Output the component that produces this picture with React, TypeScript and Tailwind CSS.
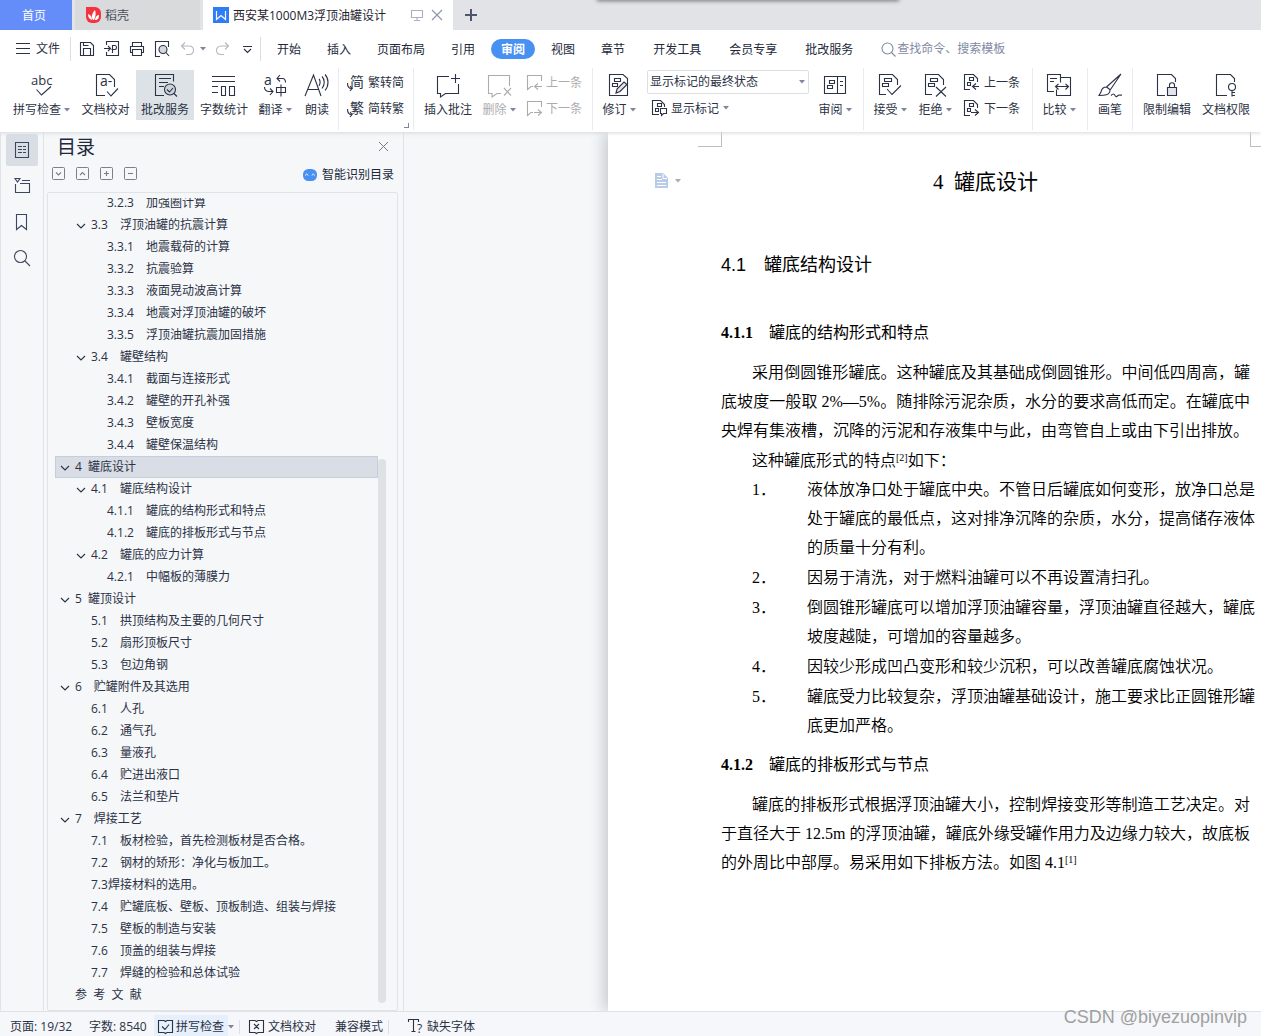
import { useState } from 'react';
import type { ReactNode } from 'react';

// ─── Types ────────────────────────────────────────────────────────────────────

interface TocEntry {
  level: 1 | 2 | 3;
  text: string;
  open?: boolean;
}

interface RibbonButtonProps {
  label: string;
  icon: ReactNode;
  className: string;
  menu?: boolean;
  active?: boolean;
  disabled?: boolean;
}

// ─── Data ─────────────────────────────────────────────────────────────────────

const SHORT_TABS = ['开始', '插入', '页面布局', '引用', '审阅', '视图', '章节'];
const EXTRA_TABS = ['开发工具', '会员专享', '批改服务'];

const TOC: TocEntry[] = [
  { level: 3, text: '3.2.3 加强圈计算' },
  { level: 2, text: '3.3 浮顶油罐的抗震计算', open: true },
  { level: 3, text: '3.3.1 地震载荷的计算' },
  { level: 3, text: '3.3.2 抗震验算' },
  { level: 3, text: '3.3.3 液面晃动波高计算' },
  { level: 3, text: '3.3.4 地震对浮顶油罐的破坏' },
  { level: 3, text: '3.3.5 浮顶油罐抗震加固措施' },
  { level: 2, text: '3.4 罐壁结构', open: true },
  { level: 3, text: '3.4.1 截面与连接形式' },
  { level: 3, text: '3.4.2 罐壁的开孔补强' },
  { level: 3, text: '3.4.3 壁板宽度' },
  { level: 3, text: '3.4.4 罐壁保温结构' },
  { level: 1, text: '4  罐底设计', open: true },
  { level: 2, text: '4.1 罐底结构设计', open: true },
  { level: 3, text: '4.1.1 罐底的结构形式和特点' },
  { level: 3, text: '4.1.2 罐底的排板形式与节点' },
  { level: 2, text: '4.2 罐底的应力计算', open: true },
  { level: 3, text: '4.2.1 中幅板的薄膜力' },
  { level: 1, text: '5  罐顶设计', open: true },
  { level: 2, text: '5.1 拱顶结构及主要的几何尺寸' },
  { level: 2, text: '5.2 扇形顶板尺寸' },
  { level: 2, text: '5.3 包边角钢' },
  { level: 1, text: '6 贮罐附件及其选用', open: true },
  { level: 2, text: '6.1 人孔' },
  { level: 2, text: '6.2 通气孔' },
  { level: 2, text: '6.3 量液孔' },
  { level: 2, text: '6.4 贮进出液口' },
  { level: 2, text: '6.5 法兰和垫片' },
  { level: 1, text: '7 焊接工艺', open: true },
  { level: 2, text: '7.1 板材检验，首先检测板材是否合格。' },
  { level: 2, text: '7.2 钢材的矫形：净化与板加工。' },
  { level: 2, text: '7.3焊接材料的选用。' },
  { level: 2, text: '7.4 贮罐底板、壁板、顶板制造、组装与焊接' },
  { level: 2, text: '7.5 壁板的制造与安装' },
  { level: 2, text: '7.6 顶盖的组装与焊接' },
  { level: 2, text: '7.7 焊缝的检验和总体试验' },
  { level: 1, text: '参  考  文  献' },
];

const FEATURES = [
  '液体放净口处于罐底中央。不管日后罐底如何变形，放净口总是处于罐底的最低点，这对排净沉降的杂质，水分，提高储存液体的质量十分有利。',
  '因易于清洗，对于燃料油罐可以不再设置清扫孔。',
  '倒圆锥形罐底可以增加浮顶油罐容量，浮顶油罐直径越大，罐底坡度越陡，可增加的容量越多。',
  '因较少形成凹凸变形和较少沉积，可以改善罐底腐蚀状况。',
  '罐底受力比较复杂，浮顶油罐基础设计，施工要求比正圆锥形罐底更加严格。',
];

// ─── Helpers ──────────────────────────────────────────────────────────────────

function cn(...classes: (string | false | null | undefined)[]) {
  return classes.filter(Boolean).join(' ');
}

// A single space after the number is a full-width gap in the outline.
function tocText(text: string) {
  return text.replace(/^([\d.]+) (?! )/, '$1\u3000');
}

// ─── Icons ────────────────────────────────────────────────────────────────────

function Svg({ size = 24, children, className }: { size?: number; children: ReactNode; className?: string }) {
  return (
    <svg
      width={size}
      height={size}
      viewBox={`0 0 ${size} ${size}`}
      fill="none"
      stroke="currentColor"
      strokeWidth="1.1"
      aria-hidden="true"
      className={cn('shrink-0 overflow-visible', className)}
    >
      {children}
    </svg>
  );
}

function Glyph({ x, y, size, children }: { x: number; y: number; size: number; children: string }) {
  return (
    <text x={x} y={y} fontSize={size} fill="currentColor" stroke="none">
      {children}
    </text>
  );
}

function Caret({ className }: { className?: string }) {
  return (
    <svg width="6" height="4" viewBox="0 0 6 4" aria-hidden="true" className={cn('shrink-0', className)}>
      <path d="M0 0h6L3 3.5z" fill="#7d879c" />
    </svg>
  );
}

const ICONS = {
  spell: (
    <Svg>
      <Glyph x={1} y={12} size={13}>abc</Glyph>
      <path d="M6.5 16.5l5 5.5L21 13.5" />
    </Svg>
  ),
  proof: (
    <Svg>
      <path d="M11 22.5H2.5v-21h13l5 5V14M13 18.5l4 4.5 7-7.5" />
      <Glyph x={6} y={13} size={14}>a-</Glyph>
    </Svg>
  ),
  correct: (
    <Svg>
      <path d="M11 22.500H2.500v-21h18v7M6 5.500h12M6 9.500h9M6 13.500h5" />
      <circle cx="17" cy="16.500" r="5.500" fill="#cdd3da" />
      <path d="M14 16.500l2.500 2.500 3.500-4M21 20.500l3 3" />
    </Svg>
  ),
  count: (
    <Svg>
      <path d="M0 3.500h23M0 8.500h23M0 13.500h6M0 19.500h6M9.500 13.500h4v9h-4zM17.500 13.500h5v9h-5z" />
    </Svg>
  ),
  translate: (
    <Svg>
      <Glyph x={1} y={12} size={14}>a</Glyph>
      <path d="M17 2l-3 3.500 3 3M14.500 5.500h5c2 0 3 1.500 3 4M1.500 14c0 3 2 4.500 5 4.500h3M7 15.500l3 3-3 3.500" />
      <path d="M13.500 14.500h9v5h-9zM18 11.500v12" />
    </Svg>
  ),
  read: (
    <Svg>
      <path d="M0 23L8.500 2 16 23M3 16.500h11" />
      <path d="M14 6c1.500 1.500 1.500 5 0 7M17 3.500c3 3 3 8.500 0 12M20 1.500c4 4 4 11.500 0 16" />
    </Svg>
  ),
  comment: (
    <Svg>
      <path d="M13 3.500H1.500v17h3V24l5-3.500h13V11M19.500 1v9M15 5.500h9" />
    </Svg>
  ),
  remove: (
    <Svg>
      <path d="M14 20.500h-4L5 24v-3.500H1.500v-18h21V13M17 15l7 7.500M24 15l-7 7.500" />
    </Svg>
  ),
  track: (
    <Svg>
      <path d="M16 1.500H2.500v21h18v-17zM7.500 5.500h6v3h-6zM5.500 10.500h5v3h-5z" />
      <path d="M9 20l1-4 7-7 3 2.500-7 7z" fill="#e3e5e9" />
    </Svg>
  ),
  pane: (
    <Svg>
      <path d="M1.500 3.500h21v17h-21zM14.500 3.500v17M6.500 7.500h5v3h-5zM4.500 12.500h5v3h-5zM17 8.500h3M17 12.500h3" />
    </Svg>
  ),
  accept: (
    <Svg>
      <path d="M8 21.500H1.500v-20h13l5 5V12M6.500 5.500h7v3h-7zM4.500 10.500h6v3h-6zM9 16l5 5.500 9-9" />
    </Svg>
  ),
  reject: (
    <Svg>
      <path d="M9 21.500H2.500v-20h13l5 5V12M7.500 5.500h7v3h-7zM5.500 10.500h6v3h-6zM13 14l10 9.500M23 14l-10 9.500" />
    </Svg>
  ),
  compare: (
    <Svg>
      <path d="M7 18.500H.5v-17h13v8M14 4.500h9.500v18h-14v-6M3 5.500h7M3 8.500h4M9 13.500h12M11.500 11l-3 2.500 3 3M18.500 11l3 2.500-3 3" />
    </Svg>
  ),
  brush: (
    <Svg>
      <path d="M23 1L8.500 14M23 1L12.500 16.500M8.500 14l4 3M8.500 14c-4 0-5 2.500-5.500 5L1 22.500c5 0 11 0 11-5.500M13 22.500c2-2 3-2 4 0s2 1 3 0 2 0 4-.5" />
    </Svg>
  ),
  restrict: (
    <Svg>
      <path d="M10 22.500H2.500v-21h14l4 4V9" />
      <path d="M12.500 14.500h9v8h-9z" fill="#e3e5e9" />
      <path d="M14.500 14.500V12c0-3 5-3 5 0v2.500" />
    </Svg>
  ),
  rights: (
    <Svg>
      <path d="M13 22.500H2.500v-21h14l4 4V9" />
      <circle cx="18" cy="14" r="3.500" />
      <path d="M18 17.500v6M18 19.500h3M18 22.500h3" />
    </Svg>
  ),
};

function CommentStep({ next }: { next?: boolean }) {
  return (
    <Svg size={16}>
      <path d="M7 12.500H5L1.500 15.500V1.500h14V7" />
      <path d={next ? 'M8 12.500h7M12 9.500l3.500 3-3.500 3' : 'M8.500 12.500H16M12 9.500l-3.500 3 3.500 3'} />
    </Svg>
  );
}

function ChangeStep({ next }: { next?: boolean }) {
  return (
    <Svg size={16}>
      <path d="M6 15.500H.5V.5h9l4 4V8M5.500 3.500h4v3h-4zM3.500 8.500h3v3h-3z" />
      <path d={next ? 'M7 12.500h7M11 9.500l3.500 3-3.500 3' : 'M8.500 12.500H15M12 9.500l-3.500 3 3.500 3'} />
    </Svg>
  );
}

function ConvertIcon({ glyph }: { glyph: string }) {
  return (
    <Svg size={16}>
      <Glyph x={2} y={13} size={14}>{glyph}</Glyph>
      <path d="M-.5 9c0 3 1 5.500 4 5.500M2 12l2 2.500L2 17" />
    </Svg>
  );
}

// ─── Ribbon parts ─────────────────────────────────────────────────────────────

function RibbonButton({ label, icon, className, menu, active, disabled }: RibbonButtonProps) {
  return (
    <button
      type="button"
      disabled={disabled}
      className={cn(
        'flex h-[50px] shrink-0 flex-col items-center gap-1 pt-[3px]',
        active && 'bg-[#dde2e7]',
        disabled && 'text-[#acacac]',
        className,
      )}
    >
      {icon}
      <span className="flex items-center gap-[3px] whitespace-nowrap leading-[18px]">
        {label}
        {menu && <Caret />}
      </span>
    </button>
  );
}

function SmallButton({ label, icon, disabled, menu }: { label: string; icon: ReactNode; disabled?: boolean; menu?: boolean }) {
  return (
    <button
      type="button"
      disabled={disabled}
      className={cn('flex h-6 items-center gap-1 whitespace-nowrap', disabled && 'text-[#acacac]')}
    >
      {icon}
      <span className="pt-0.5">{label}</span>
      {menu && <Caret />}
    </button>
  );
}

function Divider() {
  return <span className="-mt-0.5 h-[62px] w-px shrink-0 bg-[#eaebee]" />;
}

function Ribbon() {
  return (
    <div className="flex h-[66px] items-start overflow-hidden pt-1 pl-2">
      <RibbonButton label="拼写检查" icon={ICONS.spell} className="w-[67px]" menu />
      <RibbonButton label="文档校对" icon={ICONS.proof} className="w-[61px]" />
      <RibbonButton label="批改服务" icon={ICONS.correct} className="w-[58px]" active />
      <RibbonButton label="字数统计" icon={ICONS.count} className="w-[60px]" />
      <RibbonButton label="翻译" icon={ICONS.translate} className="w-[42px]" menu />
      <RibbonButton label="朗读" icon={ICONS.read} className="w-[42px]" />
      <Divider />
      <div className="relative flex h-[60px] w-[74px] shrink-0 flex-col gap-0.5 pl-[9px]">
        <SmallButton label="繁转简" icon={<ConvertIcon glyph="简" />} />
        <SmallButton label="简转繁" icon={<ConvertIcon glyph="繁" />} />
        <span className="absolute right-1 bottom-0.5 size-[5px] border-r border-b border-[#7d879c]" />
      </div>
      <Divider />
      <RibbonButton label="插入批注" icon={ICONS.comment} className="w-[68px]" />
      <RibbonButton label="删除" icon={ICONS.remove} className="w-[34px]" menu disabled />
      <div className="flex w-[76px] shrink-0 flex-col gap-0.5 pl-2.5">
        <SmallButton label="上一条" icon={<CommentStep />} disabled />
        <SmallButton label="下一条" icon={<CommentStep next />} disabled />
      </div>
      <Divider />
      <RibbonButton label="修订" icon={ICONS.track} className="w-[52px]" menu />
      <div className="flex w-[164px] shrink-0 flex-col gap-0.5 pl-0.5">
        <div className="relative w-[162px]">
          <select
            aria-label="显示方式"
            className="block h-6 w-full appearance-none rounded-xs border border-[#dcdee3] bg-white pl-0.5 text-[12px] outline-none"
          >
            <option>显示标记的最终状态</option>
          </select>
          <Caret className="absolute top-2.5 right-1 pointer-events-none" />
        </div>
        <div className="pl-1">
          <SmallButton
            label="显示标记"
            menu
            icon={
              <Svg size={16}>
                <path d="M8 14.500H1.500V.5h8l4 4V7M6.500 3.500h4v3h-4zM4.500 8.500h3v3h-3zM9.500 8.500h6v5h-3l-2 2v-2h-1z" />
              </Svg>
            }
          />
        </div>
      </div>
      <RibbonButton label="审阅" icon={ICONS.pane} className="w-[54px] pr-0.5" menu />
      <Divider />
      <RibbonButton label="接受" icon={ICONS.accept} className="w-[52px]" menu />
      <RibbonButton label="拒绝" icon={ICONS.reject} className="w-[38px]" menu />
      <div className="flex w-[78px] shrink-0 flex-col gap-0.5 pl-2.5">
        <SmallButton label="上一条" icon={<ChangeStep />} />
        <SmallButton label="下一条" icon={<ChangeStep next />} />
      </div>
      <Divider />
      <RibbonButton label="比较" icon={ICONS.compare} className="w-[54px] pr-0.5" menu />
      <Divider />
      <RibbonButton label="画笔" icon={ICONS.brush} className="w-[44px]" />
      <Divider />
      <RibbonButton label="限制编辑" icon={ICONS.restrict} className="w-[68px]" />
      <RibbonButton label="文档权限" icon={ICONS.rights} className="w-[50px]" />
    </div>
  );
}

// ─── Header ───────────────────────────────────────────────────────────────────

function TitleBar() {
  return (
    <div className="relative flex h-[30px] bg-[#e2e3e6]">
      <button type="button" className="w-[72px] bg-[#648dfa] pt-0.5 pr-1 text-white">首页</button>
      <button type="button" className="ml-[3px] flex w-[125px] items-center gap-1 bg-[#d9dadc] pl-[11px] text-[#4a4f5a]">
        <svg width="15" height="16" viewBox="0 0 15 16" aria-hidden="true">
          <path d="M0 0h9a6 6 0 0 1 6 6v4a6 6 0 0 1-6 6H6a6 6 0 0 1-6-6z" fill="#f5333f" />
          <path d="M7 13C5 10 6 6 9 3c1 3 1 6-1 10zM6 13C3 12 2 10 2 7c3 1 4 3 4 6zM9 13c0-3 2-5 4-5 0 3-1 5-4 5z" fill="#fff" />
        </svg>
        <span className="pt-0.5">稻壳</span>
      </button>
      <div className="ml-[3px] flex w-[250px] items-center bg-white pl-2.5">
        <svg width="16" height="16" viewBox="0 0 16 16" aria-hidden="true">
          <path d="M0 0h16v16H0z" fill="#2f7df6" />
          <path d="M3.500 4v8.500l4.500-4 4.500 4V4" fill="none" stroke="#fff" strokeWidth="1.200" />
        </svg>
        <span className="ml-1 grow pt-0.5 whitespace-nowrap text-[#1f2430]">西安某1000M3浮顶油罐设计</span>
        <Svg size={12} className="text-[#a9b0c0]">
          <path d="M.5 1.500h11v7H.5zM6 8.500v3M3 11.500h6" />
        </Svg>
        <button type="button" aria-label="关闭文档" className="mr-2.5 ml-2 text-[#8a94ad]">
          <Svg size={12}>
            <path d="M1 1l10 10M11 1L1 11" />
          </Svg>
        </button>
      </div>
      <button type="button" aria-label="新建" className="ml-3 text-[#4c5670]">
        <svg width="12" height="12" viewBox="0 0 12 12" aria-hidden="true">
          <path d="M0 6h12M6 0v12" stroke="currentColor" strokeWidth="2" />
        </svg>
      </button>
      <span className="absolute -top-1 left-[598px] h-1 w-[300px] shadow-[0_0_4px_1px_#777]" />
    </div>
  );
}

function QuickIcon({ label, children }: { label: string; children: ReactNode }) {
  return (
    <button type="button" aria-label={label}>
      <Svg size={16}>{children}</Svg>
    </button>
  );
}

function MenuRow() {
  const [tab, setTab] = useState('审阅');

  function renderTab(name: string) {
    return (
      <button
        key={name}
        type="button"
        onClick={() => setTab(name)}
        className={cn(
          'h-5 pt-0.5 whitespace-nowrap',
          name === tab && '-mx-2.5 rounded-full bg-[#4791f2] px-2.5 font-bold text-white',
        )}
      >
        {name}
      </button>
    );
  }

  return (
    <div className="flex h-9 shrink-0 items-center overflow-hidden pt-0.5 pl-4">
      <button type="button" className="flex items-center gap-1.5 whitespace-nowrap">
        <Svg size={14}>
          <path d="M0 1.500h14M0 6.500h14M0 11.500h14" />
        </Svg>
        文件
      </button>
      <span className="ml-2.5 h-6 w-px bg-[#dcdee3]" />
      <div className="ml-2 flex items-center gap-[9px]">
        <QuickIcon label="保存">
          <path d="M1.500 1.500h10l3 3v10h-13zM4.500 14.500v-7h7v7M4.500 1.500v3h5" />
        </QuickIcon>
        <QuickIcon label="输出为PDF">
          <path d="M2.500 4V.5h12v14h-12V11M0 7.500h6M4 5l2.500 2.500L4 10M8.500 12V4.500H11c2 0 2 4 0 4H7.500" />
        </QuickIcon>
        <QuickIcon label="打印">
          <path d="M3.500 5V1.500h9V5M3.500 11.500h-2v-6h13v6h-2M3.500 8.500h9v6h-9z" />
        </QuickIcon>
        <QuickIcon label="打印预览">
          <path d="M6 15.500H1.500V.5h13V6" />
          <circle cx="9" cy="8.500" r="4" fill="#d5d8de" />
          <path d="M12 11.500l3 3.500" />
        </QuickIcon>
      </div>
      <div className="ml-2.5 flex items-center text-[#b4b8c0]">
        <QuickIcon label="撤销">
          <path d="M5 1.500L1.500 5 5 8.500M1.500 5H9c6 0 6 8.500 0 8.500H6" />
        </QuickIcon>
        <Caret className="ml-1" />
        <span className="ml-2 flex">
          <QuickIcon label="恢复">
            <path d="M11 1.500L14.500 5 11 8.500M14.500 5H7c-6 0-6 8.500 0 8.500h3" />
          </QuickIcon>
        </span>
      </div>
      <button type="button" aria-label="自定义快速访问" className="ml-[13px]">
        <Svg size={9}>
          <path d="M0 1.500h9M1 4l3.500 3.500L8 4" />
        </Svg>
      </button>
      <span className="ml-2 h-6 w-px bg-[#dcdee3]" />
      <nav className="ml-4 flex items-center gap-7 text-[#22283a]">
        <div className="flex gap-[26px]">{SHORT_TABS.map(renderTab)}</div>
        <div className="flex gap-7">{EXTRA_TABS.map(renderTab)}</div>
      </nav>
      <label className="ml-7 flex items-center gap-px text-[#7f8aa3]">
        <Svg size={15}>
          <circle cx="6.500" cy="6.500" r="5.500" />
          <path d="M10.500 10.500l4 4" />
        </Svg>
        <input
          aria-label="搜索"
          placeholder="查找命令、搜索模板"
          className="w-32 bg-transparent outline-none placeholder:text-[#7f8aa3]"
        />
      </label>
    </div>
  );
}

// ─── Navigation pane ──────────────────────────────────────────────────────────

function SideBar() {
  const button = 'flex size-8 items-center justify-center rounded-xs';
  return (
    <div className="flex w-11 shrink-0 flex-col items-center gap-1 border-x border-[#e0e3e8] pt-0.5 text-[#3b4660]">
      <button type="button" aria-label="目录" className={cn(button, 'bg-[#d9dee5]')}>
        <Svg size={16}>
          <path d="M1.500.5h13v15h-13zM4 4.500h4M9 4.500h3M4 7.500h4M9 7.500h3M4 10.500h4M9 10.500h3" />
        </Svg>
      </button>
      <button type="button" aria-label="章节" className={button}>
        <Svg size={16}>
          <path d="M1 .5h5L3.500 4zM8 2.500h8M1.500 6v8.500h14v-9H6" />
        </Svg>
      </button>
      <button type="button" aria-label="书签" className={button}>
        <Svg size={16}>
          <path d="M2.500.5h10v15l-5-4-5 4z" />
        </Svg>
      </button>
      <button type="button" aria-label="查找" className={button}>
        <Svg size={16}>
          <circle cx="6.500" cy="6.500" r="6" />
          <path d="M11 11l5 5" />
        </Svg>
      </button>
    </div>
  );
}

function TocPane() {
  const [current, setCurrent] = useState(12);
  const tools = [
    { label: '展开', d: 'M4 5.500L6.500 8 9 5.500' },
    { label: '收起', d: 'M4 8l2.500-2.500L9 8' },
    { label: '增加', d: 'M4 6.500h5M6.500 4v5' },
    { label: '减少', d: 'M4 6.500h5' },
  ];

  return (
    <aside className="flex w-[360px] shrink-0 flex-col border-r border-[#e0e3e8] pl-[3px]">
      <div className="flex h-[30px] items-center justify-between pr-3.5 pl-2.5">
        <h2 className="text-[19px] text-[#22283a]">目录</h2>
        <button type="button" aria-label="关闭" className="text-[#6f788c]">
          <Svg size={11}>
            <path d="M1 0l9 9M10 0L1 9" strokeWidth="1" />
          </Svg>
        </button>
      </div>
      <div className="flex h-[30px] items-start justify-between pt-1 pr-[9px] pl-[5px]">
        <div className="flex gap-[11px] pt-px text-[#7a7f8a]">
          {tools.map((tool) => (
            <button key={tool.label} type="button" aria-label={tool.label}>
              <Svg size={13}>
                <rect x=".5" y=".5" width="12" height="12" rx="1" strokeWidth="1" />
                <path d={tool.d} />
              </Svg>
            </button>
          ))}
        </div>
        <button type="button" className="flex items-center gap-[5px] text-[#22283a]">
          <svg width="14" height="12" viewBox="0 0 14 12" aria-hidden="true">
            <rect width="14" height="12" rx="5.500" fill="#4791f2" />
            <path d="M2.500 6.500c.5-2 2-2 2.500 0M9 6.500c.5-2 2-2 2.500 0" fill="none" stroke="#fff" />
          </svg>
          智能识别目录
        </button>
      </div>
      <div className="mr-[5px] flex min-h-0 flex-1 overflow-hidden rounded-xs border border-[#e0e3e8] pt-[5px] pl-[7px]">
        <nav className="min-w-0 flex-1 overflow-hidden">
          <ul className="-mt-1.5">
            {TOC.map((entry, i) => (
              <li key={entry.text}>
                <a
                  href="#"
                  onClick={() => setCurrent(i)}
                  className={cn(
                    'flex h-[22px] items-center gap-1 border whitespace-pre',
                    i === current ? 'border-[#c5cedb] bg-[#d9dde5]' : 'border-transparent',
                    entry.level === 1 && 'pl-1',
                    entry.level === 2 && 'pl-5',
                    entry.level === 3 && 'pl-9',
                  )}
                >
                  <Svg size={11}>{entry.open && <path d="M1 4l4 4 4-4" />}</Svg>
                  {tocText(entry.text)}
                </a>
              </li>
            ))}
          </ul>
        </nav>
        <span className="mr-[11px] mt-[261px] mb-[7px] w-2 rounded-full bg-[#dfe2e5]" />
      </div>
    </aside>
  );
}

// ─── Document ─────────────────────────────────────────────────────────────────

function Cite({ children }: { children: string }) {
  return <sup className="text-[10px] leading-none">{children}</sup>;
}

function DocumentPage() {
  return (
    <main className="ml-[204px] min-w-0 flex-1 bg-white font-['Liberation_Serif','Noto_Sans_CJK_SC',serif] text-[16px] leading-[29px] text-black shadow-[-4px_0_14px_#c4c8cd]">
      <div className="flex h-[15px] justify-between pl-[90px]">
        <span className="w-6 border-r border-b border-[#bdbdbd]" />
        <span className="w-[11px] border-b border-l border-[#bdbdbd]" />
      </div>
      <div className="flex">
        <button type="button" aria-label="段落布局" className="flex w-[113px] shrink-0 items-center gap-[5px] self-start pt-[26px] pl-[47px]">
          <svg width="13" height="15" viewBox="0 0 13 15" aria-hidden="true">
            <path d="M0 0h8l5 5v10H0z" fill="#b8cce8" />
            <path d="M2 3.500h4M2 6.500h5M2 9.500h9M2 12.500h9M8 1v4.500h4" stroke="#fff" fill="none" />
          </svg>
          <Caret className="ml-0.5 opacity-70" />
        </button>
        <article className="min-w-0 flex-1 pr-[11px] pt-5 font-[350]">
          <h1 className="text-center text-[21px] font-normal leading-[30px] whitespace-pre">4  罐底设计</h1>
          <h2 className="mt-[53px] font-['Liberation_Sans','Noto_Sans_CJK_SC',sans-serif] text-[18px] font-normal leading-[30px]">
            4.1　罐底结构设计
          </h2>
          <h3 className="mt-[38px] font-normal leading-[29px]">
            <b>4.1.1</b>　罐底的结构形式和特点
          </h3>
          <p className="mt-[11px] indent-[31px] text-justify">
            采用倒圆锥形罐底。这种罐底及其基础成倒圆锥形。中间低四周高，罐底坡度一般取 2%—5%。随排除污泥杂质，水分的要求高低而定。在罐底中央焊有集液槽，沉降的污泥和存液集中与此，由弯管自上或由下引出排放。
          </p>
          <p className="mt-px indent-[31px]">
            这种罐底形式的特点<Cite>[2]</Cite>如下：
          </p>
          <ol className="-mr-[6px] flex flex-col gap-px pl-[31px]">
            {FEATURES.map((feature, i) => (
              <li key={feature} className="flex">
                <span className="w-[55px] shrink-0">{i + 1}．</span>
                <span className="min-w-0 flex-1">{feature}</span>
              </li>
            ))}
          </ol>
          <h3 className="mt-2.5 font-normal leading-[29px]">
            <b>4.1.2</b>　罐底的排板形式与节点
          </h3>
          <p className="mt-[11px] indent-[31px] text-justify">
            罐底的排板形式根据浮顶油罐大小，控制焊接变形等制造工艺决定。对于直径大于 12.5m 的浮顶油罐，罐底外缘受罐作用力及边缘力较大，故底板的外周比中部厚。易采用如下排板方法。如图 4.1<Cite>[1]</Cite>
          </p>
        </article>
      </div>
    </main>
  );
}

// ─── Status bar ───────────────────────────────────────────────────────────────

function StatusBar() {
  return (
    <footer className="relative flex h-[25px] shrink-0 items-center border-t border-[#dfe1e6] bg-[#f5f7fa] pt-1.5 pl-2.5 whitespace-nowrap">
      <span className="w-[79px]">页面: 19/32</span>
      <span className="w-[65px]">字数: 8540</span>
      <button type="button" className="flex h-6 items-center gap-[3px] bg-[#e6effc] px-1">
        <Svg size={15}>
          <path d="M6 .5H.5v12H6l1.500 1 1.500-1h5.500V.5H9l-1.500 1zM4 6.500l3 3 4-5" />
        </Svg>
        拼写检查
      </button>
      <Caret />
      <span className="ml-[5px] h-3.5 w-px bg-[#dcdee3]" />
      <button type="button" className="ml-[9px] flex items-center gap-1">
        <Svg size={15}>
          <path d="M6 .5H.5v12H6l1.500 1 1.500-1h5.500V.5H9l-1.500 1zM5 4l5 5M10 4L5 9" />
        </Svg>
        文档校对
      </button>
      <button type="button" className="ml-[19px]">兼容模式</button>
      <span className="ml-[5px] h-3.5 w-px bg-[#dcdee3]" />
      <button type="button" className="ml-[19px] flex items-center gap-[3px]">
        <Svg size={16}>
          <path d="M.5 3V.5h10V3M5.500.5v12M3.500 12.500h4" />
          <Glyph x={9} y={14} size={12}>?</Glyph>
        </Svg>
        缺失字体
      </button>
      <span className="absolute right-3.5 bottom-[7px] font-['Liberation_Sans',sans-serif] text-[18px] leading-6 text-[#a0a0a0]">
        CSDN @biyezuopinvip
      </span>
    </footer>
  );
}

// ─── App ──────────────────────────────────────────────────────────────────────

export default function App() {
  return (
    <div className="flex h-screen flex-col overflow-hidden bg-[#f5f7f9] font-['Open_Sans','Noto_Sans_CJK_SC',sans-serif] text-[12px] leading-[18px] text-[#2b3245]">
      <header className="relative z-10 shrink-0 bg-white shadow-[0_1px_4px_#d5d8dc]">
        <TitleBar />
        <MenuRow />
        <Ribbon />
      </header>
      <div className="flex min-h-0 flex-1">
        <SideBar />
        <TocPane />
        <DocumentPage />
      </div>
      <StatusBar />
    </div>
  );
}
